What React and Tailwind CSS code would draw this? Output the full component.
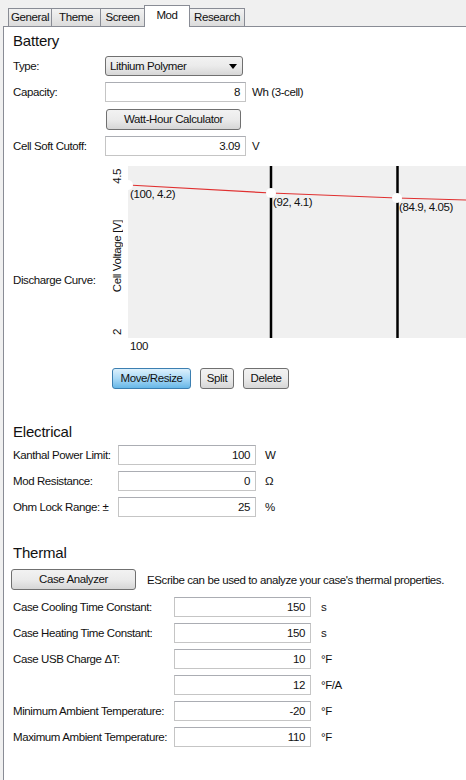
import React from 'react';

const tabs = [
  { label: 'General', w: 'w-[44px]' },
  { label: 'Theme', w: 'w-[50px]' },
  { label: 'Screen', w: 'w-[45px]' },
  { label: 'Mod', w: 'w-[46px]' },
  { label: 'Research', w: 'w-[56px]' },
];

function Tab({ label, w, active }) {
  if (active) {
    return (
      <div className={`relative z-10 -mb-px -ml-px h-[22px] ${w} border border-b-0 border-[#898c95] bg-white pt-[2px] text-center`}>
        {label}
      </div>
    );
  }
  return (
    <div className={`h-[18px] ${w} border border-b-0 border-[#898c95] bg-gradient-to-b from-[#f2f2f2] to-[#dcdcdc] text-center leading-[17px] -ml-px first:ml-0`}>
      {label}
    </div>
  );
}

function Field({ value, w }) {
  return (
    <div className={`${w} h-[20px] shrink-0 border border-[#c5c5c5] border-t-[#abadb3] bg-white pr-[5px] text-right leading-[18px]`}>
      {value}
    </div>
  );
}

function Btn({ children, className }) {
  return (
    <div className={`h-[21px] shrink-0 rounded-[3px] border border-[#707070] bg-gradient-to-b from-[#f2f2f2] via-[#ebebeb] to-[#d6d6d6] text-center leading-[19px] ${className}`}>
      {children}
    </div>
  );
}

function Row({ label, value, unit, labelW, inputW, unitGap, className }) {
  return (
    <div className={`flex items-center whitespace-nowrap ${className}`}>
      <div className={`${labelW} shrink-0`}>{label}</div>
      <Field value={value} w={inputW} />
      <div className={unitGap}>{unit}</div>
    </div>
  );
}

function Chart() {
  return (
    <div className="relative h-[172px] w-[338px] shrink-0 bg-[#f0f0f0]">
      <svg className="absolute inset-0" width="338" height="172">
        <line x1="143" y1="0" x2="143" y2="172" stroke="#000" strokeWidth="2.5" />
        <line x1="269.5" y1="0" x2="269.5" y2="172" stroke="#000" strokeWidth="2.5" />
        <polyline points="0,19 143,27 269,32 338,34" fill="none" stroke="#e03030" strokeWidth="1.2" />
        <circle cx="0" cy="19" r="5" fill="#fff" />
        <circle cx="143" cy="27" r="5" fill="#fff" />
        <circle cx="269" cy="32" r="5" fill="#fff" />
      </svg>
      <div className="absolute left-[2px] top-[21px]">(100, 4.2)</div>
      <div className="absolute left-[145px] top-[29px]">(92, 4.1)</div>
      <div className="absolute left-[271px] top-[34px]">(84.9, 4.05)</div>
    </div>
  );
}

export default function App() {
  return (
    <div
      className="h-[780px] w-[466px] overflow-hidden whitespace-nowrap bg-[#f0f0f0] text-[11.5px] leading-[14px] tracking-[-0.4px] text-[#111]"
      style={{ fontFamily: '"Liberation Sans", Arial, sans-serif' }}
    >
      {/* tab strip */}
      <div className="flex h-[26px] items-end pl-[8px]">
        {tabs.map((t) => (
          <Tab key={t.label} label={t.label} w={t.w} active={t.label === 'Mod'} />
        ))}
      </div>

      {/* tab page */}
      <div className="ml-[3px] h-[754px] border-l border-t border-[#898c95] bg-white pl-[9px]">
        {/* Battery */}
        <div className="pt-[5px] text-[15px] leading-[18px] tracking-[-0.2px]">Battery</div>

        <div className="mt-[6px] flex items-center">
          <div className="w-[92px] shrink-0">Type:</div>
          <div className="flex h-[20px] w-[138px] items-center justify-between rounded-[3px] border border-[#707070] bg-gradient-to-b from-[#f2f2f2] via-[#ebebeb] to-[#d6d6d6] pl-[4px] pr-[5px]">
            <span>Lithium Polymer</span>
            <svg width="8" height="5" viewBox="0 0 8 5">
              <path d="M0 0h8L4 5z" fill="#000" />
            </svg>
          </div>
        </div>

        <Row className="mt-[6px]" label="Capacity:" value="8" unit="Wh (3-cell)" labelW="w-[92px]" inputW="w-[141px]" unitGap="ml-[6px]" />

        <div className="mt-[7px] pl-[93px]">
          <Btn className="w-[135px]">Watt-Hour Calculator</Btn>
        </div>

        <Row className="mt-[6px]" label="Cell Soft Cutoff:" value="3.09" unit="V" labelW="w-[92px]" inputW="w-[141px]" unitGap="ml-[6px]" />

        {/* discharge curve */}
        <div className="mt-[10px] flex h-[172px]">
          <div className="w-[92px] shrink-0 pt-[107px]">Discharge Curve:</div>
          <div className="flex w-[23px] shrink-0 flex-col items-center justify-between py-[3px]">
            <span className="rotate-180 [writing-mode:vertical-rl]">4.5</span>
            <span className="rotate-180 [writing-mode:vertical-rl]">Cell Voltage [V]</span>
            <span className="rotate-180 [writing-mode:vertical-rl]">2</span>
          </div>
          <Chart />
        </div>
        <div className="mt-[1px] pl-[117px]">100</div>

        <div className="mt-[15px] flex gap-[8px] pl-[99px]">
          <div className="h-[21px] w-[79px] rounded-[3px] border border-[#3c7fb1] bg-gradient-to-b from-[#dcf0fc] via-[#a9d9f6] to-[#66b7e7] text-center leading-[19px]">
            Move/Resize
          </div>
          <Btn className="ml-[1px] w-[34px]">Split</Btn>
          <Btn className="ml-[1px] w-[46px]">Delete</Btn>
        </div>

        {/* Electrical */}
        <div className="mt-[34px] text-[15px] leading-[18px] tracking-[-0.2px]">Electrical</div>
        <Row className="mt-[4px]" label="Kanthal Power Limit:" value="100" unit="W" labelW="w-[105px]" inputW="w-[138px]" unitGap="ml-[9px]" />
        <Row className="mt-[6px]" label="Mod Resistance:" value="0" unit="Ω" labelW="w-[105px]" inputW="w-[138px]" unitGap="ml-[9px]" />
        <Row className="mt-[6px]" label="Ohm Lock Range: ±" value="25" unit="%" labelW="w-[105px]" inputW="w-[138px]" unitGap="ml-[9px]" />

        {/* Thermal */}
        <div className="mt-[27px] text-[15px] leading-[18px] tracking-[-0.2px]">Thermal</div>
        <div className="mt-[7px] flex items-center">
          <Btn className="-ml-[2px] w-[125px]">Case Analyzer</Btn>
          <div className="ml-[11px]">EScribe can be used to analyze your case's thermal properties.</div>
        </div>
        <Row className="mt-[7px]" label="Case Cooling Time Constant:" value="150" unit="s" labelW="w-[161px]" inputW="w-[137px]" unitGap="ml-[10px]" />
        <Row className="mt-[6px]" label="Case Heating Time Constant:" value="150" unit="s" labelW="w-[161px]" inputW="w-[137px]" unitGap="ml-[10px]" />
        <Row className="mt-[6px]" label="Case USB Charge ΔT:" value="10" unit="°F" labelW="w-[161px]" inputW="w-[137px]" unitGap="ml-[10px]" />
        <Row className="mt-[6px]" label="" value="12" unit="°F/A" labelW="w-[161px]" inputW="w-[137px]" unitGap="ml-[10px]" />
        <Row className="mt-[6px]" label="Minimum Ambient Temperature:" value="-20" unit="°F" labelW="w-[161px]" inputW="w-[137px]" unitGap="ml-[10px]" />
        <Row className="mt-[6px]" label="Maximum Ambient Temperature:" value="110" unit="°F" labelW="w-[161px]" inputW="w-[137px]" unitGap="ml-[10px]" />
      </div>
    </div>
  );
}
